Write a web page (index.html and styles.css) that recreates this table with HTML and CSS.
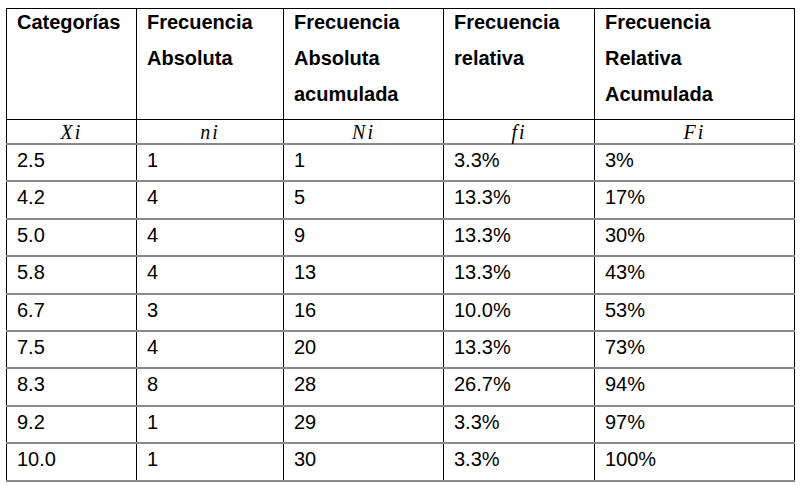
FILE: index.html
```html
<!DOCTYPE html>
<html lang="es">
<head>
<meta charset="utf-8">
<title>Tabla de frecuencias</title>
<link rel="stylesheet" href="styles.css">
</head>
<body>
<table class="freq">
  <colgroup>
    <col class="c1"><col class="c2"><col class="c3"><col class="c4"><col class="c5">
  </colgroup>
  <thead>
    <tr class="head">
      <th><div class="hd">Categorías</div></th>
      <th><div class="hd">Frecuencia<br>Absoluta</div></th>
      <th><div class="hd">Frecuencia<br>Absoluta<br>acumulada</div></th>
      <th><div class="hd">Frecuencia<br>relativa</div></th>
      <th><div class="hd">Frecuencia<br>Relativa<br>Acumulada</div></th>
    </tr>
    <tr class="sym">
      <td>Xi</td><td>ni</td><td>Ni</td><td>fi</td><td>Fi</td>
    </tr>
  </thead>
  <tbody>
    <tr><td>2.5</td><td>1</td><td>1</td><td>3.3%</td><td>3%</td></tr>
    <tr><td>4.2</td><td>4</td><td>5</td><td>13.3%</td><td>17%</td></tr>
    <tr><td>5.0</td><td>4</td><td>9</td><td>13.3%</td><td>30%</td></tr>
    <tr><td>5.8</td><td>4</td><td>13</td><td>13.3%</td><td>43%</td></tr>
    <tr><td>6.7</td><td>3</td><td>16</td><td>10.0%</td><td>53%</td></tr>
    <tr><td>7.5</td><td>4</td><td>20</td><td>13.3%</td><td>73%</td></tr>
    <tr><td>8.3</td><td>8</td><td>28</td><td>26.7%</td><td>94%</td></tr>
    <tr><td>9.2</td><td>1</td><td>29</td><td>3.3%</td><td>97%</td></tr>
    <tr><td>10.0</td><td>1</td><td>30</td><td>3.3%</td><td>100%</td></tr>
  </tbody>
</table>
</body>
</html>
```

FILE: styles.css
```css
html, body {
  margin: 0;
  padding: 0;
  background: #ffffff;
}

body {
  padding: 8px 0 0 6px;
  font-family: "Liberation Sans", Arial, sans-serif;
  color: #000;
}

.freq {
  border-collapse: collapse;
  table-layout: fixed;
  width: 788px;
}

.c1 { width: 130px; }
.c2 { width: 147px; }
.c3 { width: 160px; }
.c4 { width: 151px; }
.c5 { width: 200px; }

.freq th,
.freq td {
  border-left: 1px solid #000;
  border-right: 1px solid #000;
  border-top: 2px solid #8a8a8a;
  border-bottom: 2px solid #8a8a8a;
  padding: 3px 10px 0;
  vertical-align: top;
  text-align: left;
}

.head th {
  border-top: 1px solid #000;
  border-bottom: 1px solid #000;
  height: 110px;
  padding: 0 10px;
  font-size: 20px;
  font-weight: bold;
  line-height: 36px;
}

.hd {
  margin-top: -5px;
}

.sym td {
  border-top: 1px solid #000;
  height: 22px;
  padding: 1px 0 0;
  text-align: center;
  vertical-align: top;
  font-family: "Liberation Serif", "Times New Roman", serif;
  font-style: italic;
  font-size: 20px;
  line-height: 22px;
  letter-spacing: 2px;
}

tbody td {
  height: 32.4px;
  font-size: 20px;
  line-height: 24px;
}
```
